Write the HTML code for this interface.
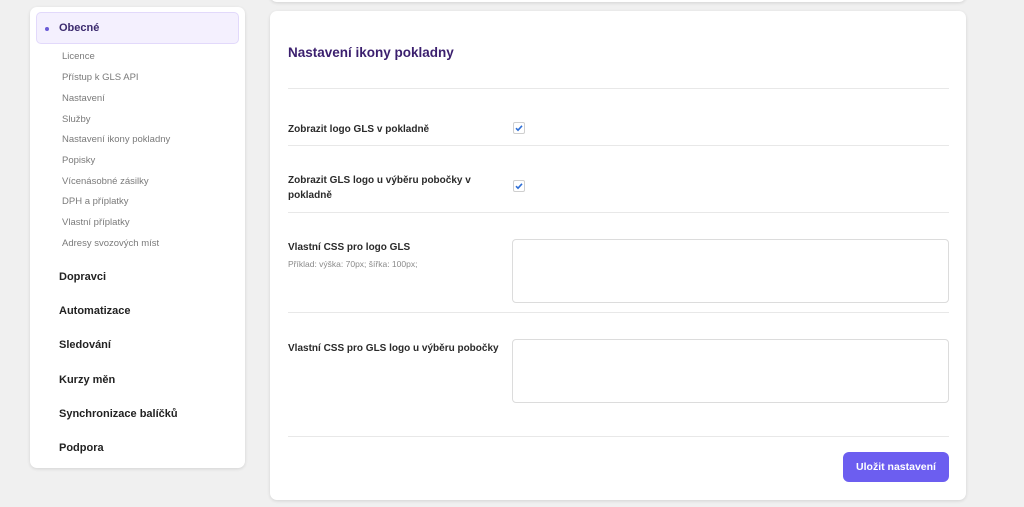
<!DOCTYPE html>
<html><head><meta charset="utf-8"><style>
*{margin:0;padding:0;box-sizing:border-box}
body{width:1024px;height:507px;background:#f0f0f0;font-family:"Liberation Sans",sans-serif;position:relative;overflow:hidden}
.a{position:absolute;white-space:nowrap}
.card{position:absolute;background:#fff;border-radius:7px;box-shadow:0 1px 3px rgba(0,0,0,.12)}
.sub{position:absolute;left:62px;font-size:9.5px;color:#7a7a7a;line-height:12px}
.main{position:absolute;left:59px;font-size:11px;font-weight:bold;color:#222;line-height:14px}
.lbl{position:absolute;left:288px;font-size:10px;font-weight:bold;color:#2a2a2a;line-height:15px;white-space:nowrap}
.hr{position:absolute;left:288px;width:661px;height:1px;background:#e8e8e8}
.cb{position:absolute;left:513px;width:12px;height:12px;border:1px solid #cfcfcf;border-radius:2px;background:#fff}
.ta{position:absolute;left:512px;width:437px;height:64px;border:1px solid #dcdcdc;border-radius:4px;background:#fff}
</style></head><body>
<div class="card" style="left:30px;top:7px;width:215px;height:461px"></div>
<div class="a" style="left:36px;top:12px;width:203px;height:32px;background:#f4f0fe;border:1px solid #e2d9fb;border-radius:5px"></div>
<div class="a" style="left:45px;top:27px;width:4px;height:4px;border-radius:50%;background:#6b5bd6"></div>
<div class="a" style="left:59px;top:22px;font-size:11px;font-weight:bold;color:#3b2a6e">Obecné</div>
<div class="sub" style="top:51px">Licence</div>
<div class="sub" style="top:72px">Přístup k GLS API</div>
<div class="sub" style="top:93px">Nastavení</div>
<div class="sub" style="top:114px">Služby</div>
<div class="sub" style="top:134px">Nastavení ikony pokladny</div>
<div class="sub" style="top:155px">Popisky</div>
<div class="sub" style="top:176px">Vícenásobné zásilky</div>
<div class="sub" style="top:196px">DPH a příplatky</div>
<div class="sub" style="top:217px">Vlastní příplatky</div>
<div class="sub" style="top:238px">Adresy svozových míst</div>
<div class="main" style="top:270px">Dopravci</div>
<div class="main" style="top:304px">Automatizace</div>
<div class="main" style="top:338px">Sledování</div>
<div class="main" style="top:373px">Kurzy měn</div>
<div class="main" style="top:407px">Synchronizace balíčků</div>
<div class="main" style="top:441px">Podpora</div>

<div class="card" style="left:270px;top:-20px;width:696px;height:22px"></div>
<div class="card" style="left:270px;top:11px;width:696px;height:489px"></div>
<div class="a" style="left:288px;top:45px;font-size:13.5px;font-weight:bold;color:#3b1f6e">Nastavení ikony pokladny</div>
<div class="hr" style="top:88px"></div>
<div class="lbl" style="top:122px">Zobrazit logo GLS v pokladně</div>
<div class="cb" style="top:122px"><svg width="10" height="10" viewBox="0 0 10 10" style="position:absolute;left:0;top:0"><path d="M2 5.2 L4 7.2 L8 2.8" stroke="#2f6fd6" stroke-width="1.6" fill="none"/></svg></div>
<div class="hr" style="top:145px"></div>
<div class="lbl" style="top:173px">Zobrazit GLS logo u výběru pobočky v<br>pokladně</div>
<div class="cb" style="top:180px"><svg width="10" height="10" viewBox="0 0 10 10" style="position:absolute;left:0;top:0"><path d="M2 5.2 L4 7.2 L8 2.8" stroke="#2f6fd6" stroke-width="1.6" fill="none"/></svg></div>
<div class="hr" style="top:212px"></div>
<div class="lbl" style="top:240px">Vlastní CSS pro logo GLS</div>
<div class="a" style="left:288px;top:259px;font-size:8.5px;color:#8a8a8a">Příklad: výška: 70px; šířka: 100px;</div>
<div class="ta" style="top:239px"></div>
<div class="hr" style="top:312px"></div>
<div class="lbl" style="top:341px">Vlastní CSS pro GLS logo u výběru pobočky</div>
<div class="ta" style="top:339px"></div>
<div class="hr" style="top:436px"></div>
<div class="a" style="left:843px;top:452px;width:106px;height:30px;background:#6c5ef0;border-radius:6px;color:#fff;font-size:10.5px;font-weight:bold;text-align:center;line-height:30px">Uložit nastavení</div>
</body></html>
